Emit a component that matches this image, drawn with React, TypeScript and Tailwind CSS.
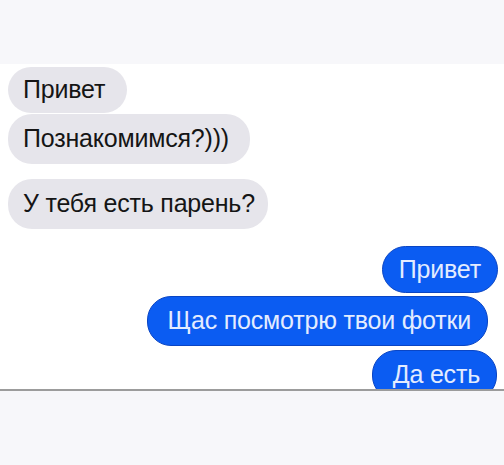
const incoming = [
  { text: "Привет", h: "h-[46px]", mt: "mt-[3px]", pr: "pr-[22px]" },
  { text: "Познакомимся?)))", h: "h-[50px]", mt: "mt-[1px]", pr: "pr-[21px]" },
  { text: "У тебя есть парень?", h: "h-[50px]", mt: "mt-[15px]", pr: "pr-[13px]" },
];

const outgoing = [
  { text: "Привет", h: "h-[47px]", mt: "mt-[17px]", mr: "mr-[6px]", pl: "pl-[16px]" },
  { text: "Щас посмотрю твои фотки", h: "h-[50px]", mt: "mt-[3px]", mr: "mr-[16px]", pl: "pl-[19px]" },
  { text: "Да есть", h: "h-[50px]", mt: "mt-[4px]", mr: "mr-[7px]", pl: "pl-[20px]" },
];

export default function App() {
  return (
    <div
      className="w-[504px] h-[465px] bg-[#f7f7fa] flex flex-col overflow-hidden"
      style={{ fontFamily: '"Liberation Sans", Arial, sans-serif' }}
    >
      <div className="h-[64px] shrink-0" />
      <div className="h-[327px] shrink-0 bg-white border-b-2 border-[#9c9c9c] overflow-hidden flex flex-col">
        {incoming.map((m) => (
          <div
            key={m.text}
            className={`${m.h} ${m.mt} ${m.pr} shrink-0 self-start ml-[8px] pl-[15px] rounded-[24px] bg-[#e6e5eb] text-[#151515] text-[25px] tracking-[-0.2px] flex items-center`}
          >
            {m.text}
          </div>
        ))}
        {outgoing.map((m) => (
          <div
            key={m.text + "-out"}
            className={`${m.h} ${m.mt} ${m.mr} ${m.pl} shrink-0 self-end pr-[16px] rounded-[24px] bg-[#0b5cf2] border border-[#0a45c4] text-[#e3ecff] text-[25px] tracking-[-0.2px] flex items-center`}
          >
            {m.text}
          </div>
        ))}
      </div>
    </div>
  );
}
